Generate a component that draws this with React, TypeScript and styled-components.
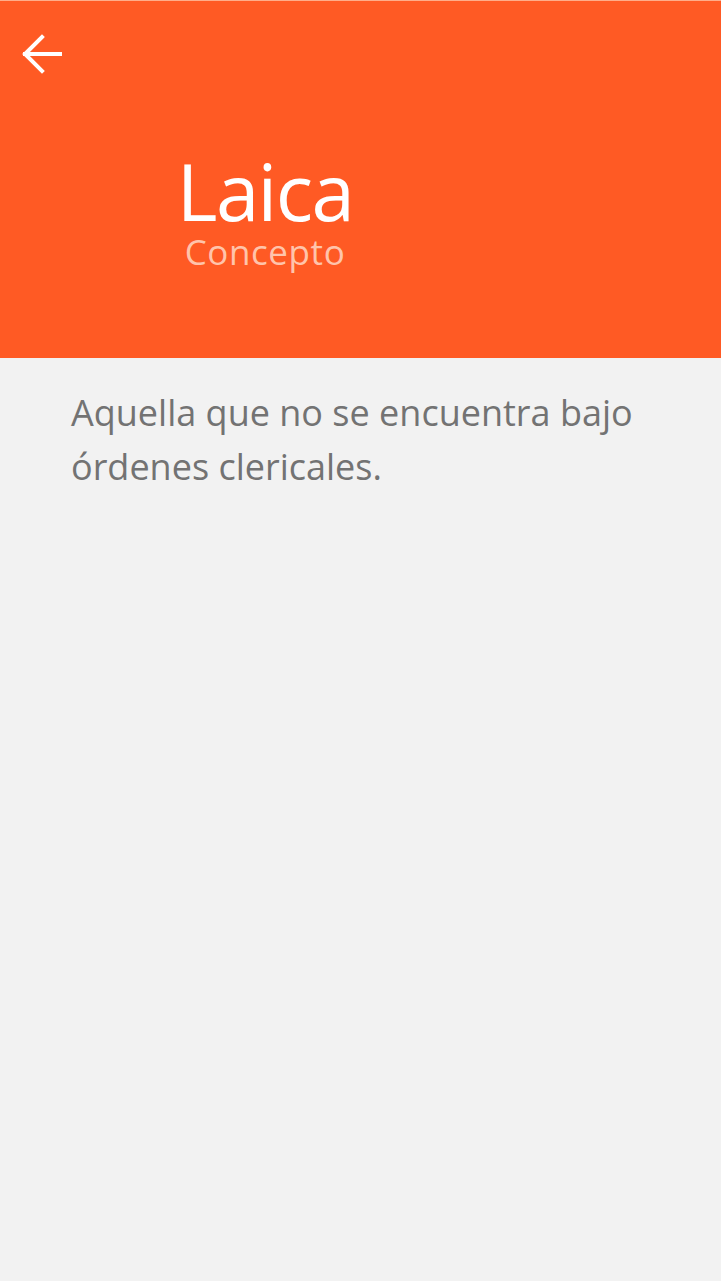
import styled, { createGlobalStyle } from 'styled-components'

const GlobalStyle = createGlobalStyle`
  html, body {
    margin: 0;
    padding: 0;
    background: #f2f2f2;
  }
  body {
    font-family: "Open Sans", "Noto Sans", sans-serif;
  }
`

const Page = styled.div`
  min-height: 1281px;
  background: #f2f2f2;
  display: flex;
  flex-direction: column;
`

const Header = styled.header`
  height: 357px;
  background: #ff5a24;
  border-top: 1px solid #ffad8a;
  display: flex;
  flex-direction: column;
`

const TopBar = styled.div`
  height: 104px;
  padding-left: 21px;
  display: flex;
  align-items: flex-start;
  padding-top: 32px;
  box-sizing: border-box;
`

const BackButton = styled.button`
  background: none;
  border: none;
  padding: 0;
  width: 42px;
  height: 42px;
  cursor: pointer;
  display: flex;
`

const TitleBlock = styled.div`
  width: 530px;
  display: flex;
  flex-direction: column;
  align-items: center;
  margin-top: 47px;
`

const Title = styled.h1`
  margin: 0;
  font-weight: 400;
  font-size: 78px;
  line-height: 78px;
  letter-spacing: -1.6px;
  color: #ffffff;
`

const Subtitle = styled.div`
  font-size: 35px;
  line-height: 40px;
  color: #ffc4ab;
  letter-spacing: 0.6px;
  margin-top: 2px;
`

const Content = styled.main`
  padding: 28px 20px 0 71px;
`

const Definition = styled.p`
  margin: 0;
  font-size: 36px;
  line-height: 54px;
  color: #737373;
  white-space: nowrap;
`

const BackArrow = () => (
  <svg width="42" height="42" viewBox="0 0 42 42" fill="none">
    <path d="M39 21H4M21 4L4 21l17 17" stroke="#ffffff" strokeWidth="4" strokeLinecap="square" />
  </svg>
)

export default function App() {
  return (
    <>
      <GlobalStyle />
      <Page>
        <Header>
          <TopBar>
            <BackButton aria-label="Volver">
              <BackArrow />
            </BackButton>
          </TopBar>
          <TitleBlock>
            <Title>Laica</Title>
            <Subtitle>Concepto</Subtitle>
          </TitleBlock>
        </Header>
        <Content>
          <Definition>
            Aquella que no se encuentra bajo
            <br />
            órdenes clericales.
          </Definition>
        </Content>
      </Page>
    </>
  )
}
